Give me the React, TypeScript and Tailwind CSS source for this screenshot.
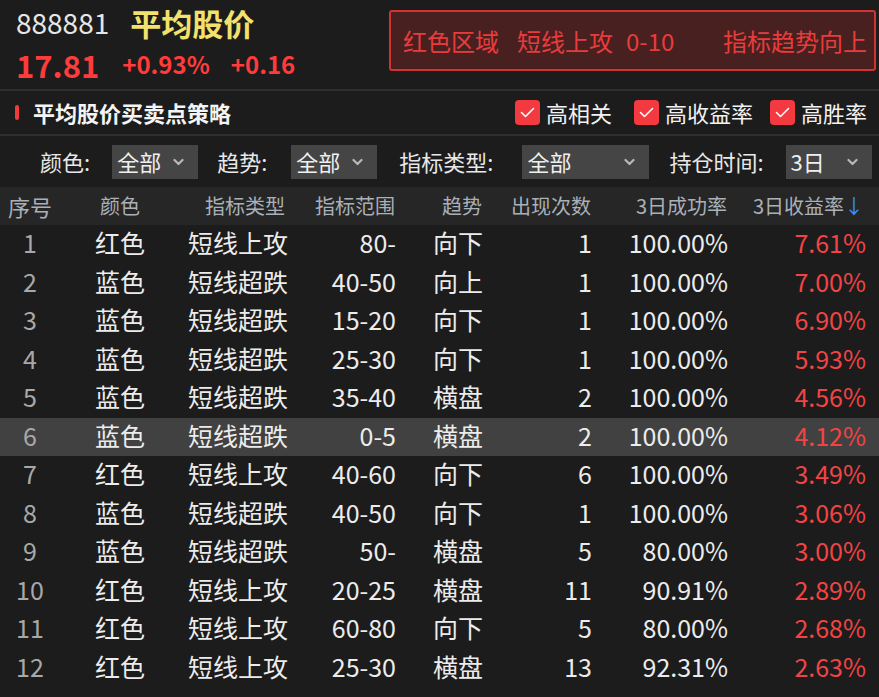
import React from 'react'

const font = { fontFamily: '"Noto Sans CJK SC", "Noto Sans", sans-serif' }

/* ── Table data ── */
const rows = [
  { id: 1, color: '红色', type: '短线上攻', range: '80-', trend: '向下', count: '1', win: '100.00%', ret: '7.61%' },
  { id: 2, color: '蓝色', type: '短线超跌', range: '40-50', trend: '向上', count: '1', win: '100.00%', ret: '7.00%' },
  { id: 3, color: '蓝色', type: '短线超跌', range: '15-20', trend: '向下', count: '1', win: '100.00%', ret: '6.90%' },
  { id: 4, color: '蓝色', type: '短线超跌', range: '25-30', trend: '向下', count: '1', win: '100.00%', ret: '5.93%' },
  { id: 5, color: '蓝色', type: '短线超跌', range: '35-40', trend: '横盘', count: '2', win: '100.00%', ret: '4.56%' },
  { id: 6, color: '蓝色', type: '短线超跌', range: '0-5', trend: '横盘', count: '2', win: '100.00%', ret: '4.12%' },
  { id: 7, color: '红色', type: '短线上攻', range: '40-60', trend: '向下', count: '6', win: '100.00%', ret: '3.49%' },
  { id: 8, color: '蓝色', type: '短线超跌', range: '40-50', trend: '向下', count: '1', win: '100.00%', ret: '3.06%' },
  { id: 9, color: '蓝色', type: '短线超跌', range: '50-', trend: '横盘', count: '5', win: '80.00%', ret: '3.00%' },
  { id: 10, color: '红色', type: '短线上攻', range: '20-25', trend: '横盘', count: '11', win: '90.91%', ret: '2.89%' },
  { id: 11, color: '红色', type: '短线上攻', range: '60-80', trend: '向下', count: '5', win: '80.00%', ret: '2.68%' },
  { id: 12, color: '红色', type: '短线上攻', range: '25-30', trend: '横盘', count: '13', win: '92.31%', ret: '2.63%' },
]

const gridCols = 'grid grid-cols-[60px_120px_108px_108px_87px_109px_136px_138px] pr-[13px]'

function Chevron() {
  return (
    <svg width="11" height="8" viewBox="0 0 11 8" aria-hidden>
      <polyline points="1.5,2 5.5,6 9.5,2" fill="none" stroke="#b8b8b8" strokeWidth="2.2" strokeLinecap="round" strokeLinejoin="round" />
    </svg>
  )
}

function Select({ value, width }: { value: string; width: string }) {
  return (
    <div className={`flex h-[34px] items-center justify-between bg-[#454545] pl-[5px] pr-[14px] text-[22px] text-[#f0f0f0] ${width}`}>
      <span>{value}</span>
      <Chevron />
    </div>
  )
}

function Check({ label }: { label: string }) {
  return (
    <div className="flex items-center gap-[6px]">
      <div className="flex h-[25px] w-[25px] items-center justify-center rounded-[4px] bg-[#f23a40]">
        <svg width="25" height="25" viewBox="0 0 25 25" aria-hidden>
          <polyline points="6.5,12.5 10.5,16.5 18.5,8.5" fill="none" stroke="#ffffff" strokeWidth="1.6" strokeLinecap="round" strokeLinejoin="round" />
        </svg>
      </div>
      <span className="text-[22px] text-[#f2f2f2]">{label}</span>
    </div>
  )
}

export default function App() {
  return (
    <div className="h-[697px] w-[879px] overflow-hidden bg-[#1c1c1c]" style={font}>
      {/* ── Quote header ── */}
      <div className="flex h-[91px] justify-between border-b-2 border-[#2e2e2e]">
        <div className="flex flex-col pl-[16px] pt-[1px]">
          <div className="flex h-[42px] items-center gap-[21px]">
            <span className="text-[28px] leading-none text-[#e6e6e6]">888881</span>
            <span className="text-[31px] font-bold leading-none text-[#f2e26c]">平均股价</span>
          </div>
          <div className="flex h-[42px] items-center font-bold text-[#ff3b3b]">
            <span className="text-[31px] leading-none">17.81</span>
            <span className="ml-[23px] text-[24px] leading-none">+0.93%</span>
            <span className="ml-[21px] text-[24px] leading-none">+0.16</span>
          </div>
        </div>
        <div className="mr-[3px] mt-[10px] flex h-[61px] w-[487px] items-center justify-between rounded-[3px] border-2 border-[#d23232] bg-[#482020] pl-[12px] pr-[7px] text-[24px] text-[#e83c3c]">
          <div className="flex items-center">
            <span>红色区域</span>
            <span className="ml-[18px]">短线上攻</span>
            <span className="ml-[13px]">0-10</span>
          </div>
          <span>指标趋势向上</span>
        </div>
      </div>

      {/* ── Strategy title + toggles ── */}
      <div className="flex h-[45px] items-center justify-between border-b-2 border-[#2e2e2e] pl-[15px] pr-[12px]">
        <div className="flex items-center gap-[14px]">
          <div className="h-[15px] w-[4px] rounded-full bg-[#f23a3a]" />
          <span className="text-[22px] font-bold text-[#f4f4f4]">平均股价买卖点策略</span>
        </div>
        <div className="flex items-center">
          <Check label="高相关" />
          <div className="ml-[22px]">
            <Check label="高收益率" />
          </div>
          <div className="ml-[17px]">
            <Check label="高胜率" />
          </div>
        </div>
      </div>

      {/* ── Filters ── */}
      <div className="flex h-[51px] items-center pl-[40px] text-[22px] text-[#e8e8e8]">
        <span>颜色:</span>
        <div className="ml-[22px]">
          <Select value="全部" width="w-[86px]" />
        </div>
        <span className="ml-[19px]">趋势:</span>
        <div className="ml-[24px]">
          <Select value="全部" width="w-[86px]" />
        </div>
        <span className="ml-[22px]">指标类型:</span>
        <div className="ml-[29px]">
          <Select value="全部" width="w-[127px]" />
        </div>
        <span className="ml-[20px]">持仓时间:</span>
        <div className="ml-[22px]">
          <Select value="3日" width="w-[86px]" />
        </div>
      </div>

      {/* ── Table ── */}
      <div className={`${gridCols} h-[38px] items-center bg-[#262626] text-[20px] text-[#a9b0b8]`}>
        <span className="text-center text-[22px]">序号</span>
        <span className="text-center">颜色</span>
        <span className="pr-[3px] text-right">指标类型</span>
        <span className="pr-[1px] text-right">指标范围</span>
        <span className="pr-[1px] text-right">趋势</span>
        <span className="pr-[1px] text-right">出现次数</span>
        <span className="pr-[1px] text-right">3日成功率</span>
        <span className="pr-[2px] text-right">
          3日收益率<span className="text-[#3a8cff]">↓</span>
        </span>
      </div>

      {rows.map((r) => (
        <div
          key={r.id}
          className={`${gridCols} h-[38.5px] items-center pb-[3px] text-[25px] leading-none text-[#ececec] ${r.id === 6 ? 'bg-[#414141]' : ''}`}
        >
          <span className="text-center text-[#a8a8a8]">{r.id}</span>
          <span className="text-center">{r.color}</span>
          <span className="text-right">{r.type}</span>
          <span className="text-right">{r.range}</span>
          <span className="text-right">{r.trend}</span>
          <span className="text-right">{r.count}</span>
          <span className="text-right">{r.win}</span>
          <span className="text-right text-[#f24444]">{r.ret}</span>
        </div>
      ))}
    </div>
  )
}
